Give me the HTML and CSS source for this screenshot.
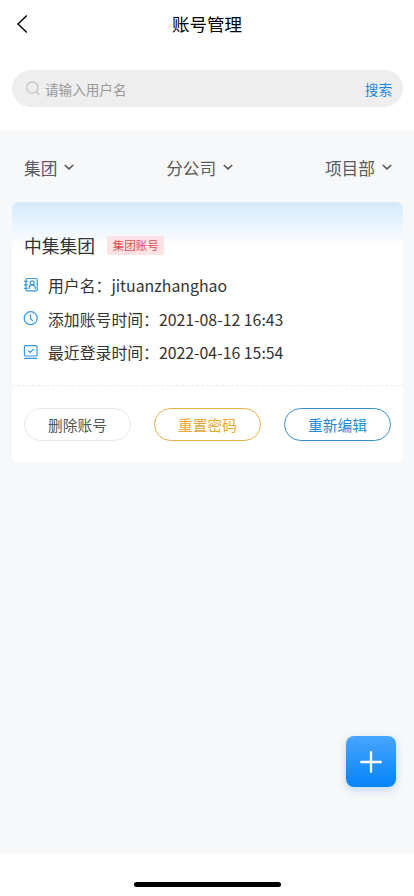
FILE: index.html
```html
<!DOCTYPE html>
<html lang="zh-CN">
<head>
<meta charset="utf-8">
<meta name="viewport" content="width=device-width, initial-scale=1">
<title>账号管理</title>
<link rel="stylesheet" href="styles.css">
</head>
<body>
<div class="app">
  <header class="header">
    <svg class="back" width="12" height="20" viewBox="0 0 12 20"><path d="M10.8 1.5 2 10l8.8 8.5"/></svg>
    <h1 class="title">账号管理</h1>
  </header>
  <div class="search">
    <svg class="search-icon" width="15" height="15" viewBox="0 0 15 15"><circle cx="6.4" cy="6.6" r="5.7"/><path d="m10.6 10.8 2.7 3"/></svg>
    <span class="placeholder">请输入用户名</span>
    <span class="search-action">搜索</span>
  </div>
  <main class="content">
    <nav class="filters">
      <div class="filter">集团<svg class="chevron" width="10" height="7" viewBox="0 0 10 7"><path d="m.8 1 4.2 3.9L9.2 1"/></svg></div>
      <div class="filter">分公司<svg class="chevron" width="10" height="7" viewBox="0 0 10 7"><path d="m.8 1 4.2 3.9L9.2 1"/></svg></div>
      <div class="filter">项目部<svg class="chevron" width="10" height="7" viewBox="0 0 10 7"><path d="m.8 1 4.2 3.9L9.2 1"/></svg></div>
    </nav>
    <section class="card">
      <div class="card-head"><h2 class="name">中集集团</h2><span class="tag">集团账号</span></div>
      <div class="info">
        <div class="row">
          <svg class="icon" width="16" height="16" viewBox="0 0 16 16"><rect x="3" y="1.5" width="11.2" height="12.4" rx="1.2"/><path d="M1 4.3h3.6M1 7.8h3.6M1 11.3h3.6"/><circle cx="9.2" cy="5.8" r="2"/><path d="M6.1 12V11c0-4.2 6.2-4.2 6.2 0v1"/></svg>
          <span>用户名：jituanzhanghao</span>
        </div>
        <div class="row">
          <svg class="icon" width="16" height="16" viewBox="0 0 16 16"><circle cx="7.7" cy="8.2" r="6.5"/><path d="M7.5 4.3v4.1l2.4 2.7"/></svg>
          <span>添加账号时间：2021-08-12 16:43</span>
        </div>
        <div class="row">
          <svg class="icon" width="16" height="16" viewBox="0 0 16 16"><rect x="1.4" y="1.6" width="12.6" height="10.4" rx="1"/><path d="m5.2 6.5 2 2 3.5-3.5M1.2 14.4h13"/></svg>
          <span>最近登录时间：2022-04-16 15:54</span>
        </div>
      </div>
      <div class="divider"></div>
      <div class="actions">
        <button class="btn">删除账号</button>
        <button class="btn btn-reset">重置密码</button>
        <button class="btn btn-edit">重新编辑</button>
      </div>
    </section>
    <button class="add" aria-label="添加"><svg width="22" height="22" viewBox="0 0 22 22"><path d="M11 1.2v19.6M1.2 11h19.6"/></svg></button>
  </main>
  <footer class="footer"><div class="home-bar"></div></footer>
</div>
</body>
</html>
```

FILE: styles.css
```css
* { box-sizing: border-box; }
body {
  margin: 0;
  background: #fff;
  font-family: "Noto Sans CJK SC", sans-serif;
  color: #333;
}
.app { height: 896px; display: flex; flex-direction: column; overflow: hidden; }
svg { fill: none; flex: none; }
.header {
  height: 48px;
  display: grid;
  grid-template-columns: 12px 1fr 12px;
  align-items: center;
  padding: 0 16px;
}
.back { stroke: #000; stroke-width: 1.4; }
.title {
  margin: 0;
  text-align: center;
  font-size: 17.5px;
  font-weight: 400;
  line-height: 26px;
  color: #000;
}
.search {
  height: 37px;
  flex: none;
  margin: 22px 11px 24px 12px;
  padding: 0 11px 0 14px;
  border-radius: 19px;
  background: #eee;
  display: flex;
  align-items: center;
  font-size: 13.6px;
}
.search-icon { stroke: #bdbdbd; stroke-width: 1.1; }
.placeholder { flex: 1; margin-left: 4px; color: #999; }
.search-action { color: #1c86dc; }
.content {
  height: 723px;
  position: relative;
  padding: 0 11px 0 12px;
  background: #f7f8f9;
}
.filters {
  height: 71px;
  padding: 2px 11px 0 12px;
  display: flex;
  justify-content: space-between;
  align-items: center;
  font-size: 16.7px;
  color: #5a5a5a;
}
.filter { display: flex; align-items: center; gap: 7px; }
.chevron { stroke: #555; stroke-width: 1.6; }
.card {
  height: 261px;
  border-radius: 7px;
  background: linear-gradient(#d5e9fb 0, #e7f3fd 20px, #fff 45px);
}
.card-head {
  height: 67px;
  padding: 19px 12px 0;
  display: flex;
  align-items: center;
  gap: 12px;
}
.name { margin: 0; font-size: 17.8px; font-weight: 400; line-height: 26px; }
.tag {
  width: 57px;
  height: 19px;
  border-radius: 2px;
  background: #fee2e5;
  color: #dc5055;
  font-size: 11.5px;
  line-height: 18px;
  text-align: center;
}
.info { padding: 0 11px; }
.row {
  height: 33.6px;
  display: flex;
  align-items: center;
  gap: 9px;
  font-size: 15.85px;
  white-space: nowrap;
}
.icon { stroke: #3598e5; stroke-width: 1.2; margin-top: -2px; }
.divider { margin-top: 15px; border-top: 1px dashed #ececec; }
.actions { display: flex; justify-content: space-between; padding: 22px 12px 0; }
.btn {
  width: 107px;
  height: 33px;
  padding: 1px 0 0;
  border: 1px solid #e8e8e8;
  border-radius: 17px;
  background: #fff;
  color: #555;
  font-family: inherit;
  font-size: 14.7px;
  line-height: 22px;
}
.btn-reset { border-color: #e8b04a; color: #e8a735; }
.btn-edit { border-color: #398fcb; color: #2588d2; }
.add {
  position: absolute;
  left: 346px;
  top: 605px;
  width: 50px;
  height: 51px;
  padding: 0;
  border: 0;
  border-radius: 8px;
  background: linear-gradient(#48a5fd, #0583fb);
  box-shadow: 0 3px 8px rgba(30, 120, 210, .25);
  display: flex;
  align-items: center;
  justify-content: center;
}
.add svg { stroke: #fff; stroke-width: 2.3; stroke-linecap: round; }
.footer { height: 42px; display: flex; justify-content: center; align-items: flex-start; padding-top: 28px; }
.home-bar { width: 147px; height: 5px; border-radius: 3px; background: #000; }
```
